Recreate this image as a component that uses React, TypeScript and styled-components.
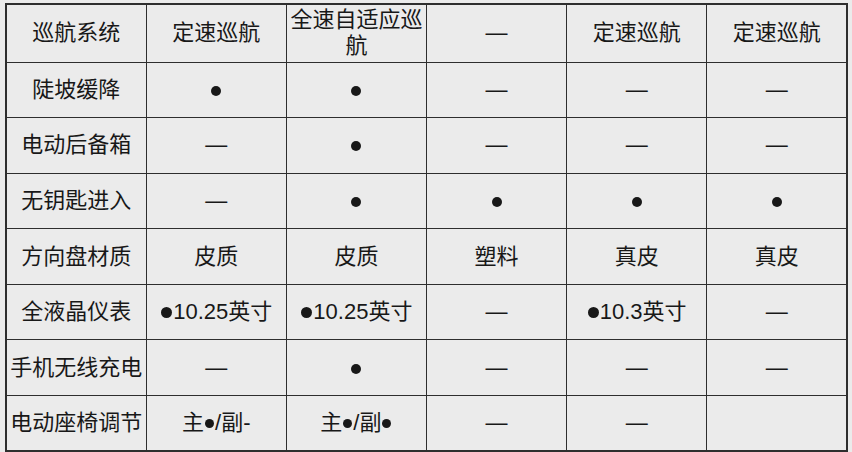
import React from 'react'
import styled, {createGlobalStyle} from 'styled-components'

const colors = {
    page: "#ebebeb",
    line: "#2e2e2e",
    text: "#181818",
};

const GlobalStyle = createGlobalStyle`
    html, body {
        margin: 0;
        padding: 0;
        background: ${colors.page};
    }
    body {
        font-family: "Liberation Sans", "Noto Sans CJK SC", sans-serif;
        color: ${colors.text};
    }
`

const D = '—'
const B = '●'

const rows: string[][] = [
    ['巡航系统', '定速巡航', '全速自适应巡航', D, '定速巡航', '定速巡航'],
    ['陡坡缓降', B, B, D, D, D],
    ['电动后备箱', D, B, D, D, D],
    ['无钥匙进入', D, B, B, B, B],
    ['方向盘材质', '皮质', '皮质', '塑料', '真皮', '真皮'],
    ['全液晶仪表', '●10.25英寸', '●10.25英寸', D, '●10.3英寸', D],
    ['手机无线充电', D, B, D, D, D],
    ['电动座椅调节', '主●/副-', '主●/副●', D, D, ''],
]

const Wrap = styled.div`
    padding: 3px 4px 0 5px;
`

const Table = styled.table`
    width: 843px;
    border-collapse: collapse;
    table-layout: fixed;
    border: 2px solid ${colors.line};
`

const Row = styled.tr<{$first?: boolean}>`
    height: ${_ => _.$first ? '58px' : '55.6px'};
`

const Cell = styled.td`
    border: 1.6px solid ${colors.line};
    padding: 0;
    text-align: center;
    vertical-align: middle;
    font-size: 22px;
    line-height: 26px;
    word-break: break-all;
`

const Dot = styled.span<{$size: number}>`
    display: inline-block;
    width: ${_ => _.$size}px;
    height: ${_ => _.$size}px;
    border-radius: 50%;
    background: ${colors.text};
    margin: 0 1px;
    vertical-align: ${_ => _.$size > 9 ? '1px' : '2px'};
`

function renderText(text: string) {
    if (text === B) return <Dot $size={10}/>
    if (text === D) return text
    const parts = text.split('●')
    const small = parts[0] === '主'
    return parts.map((p, i) => (
        <React.Fragment key={i}>
            {i > 0 && <Dot $size={small ? 9 : 11}/>}
            {p}
        </React.Fragment>
    ))
}

export default function App() {
    return (
        <Wrap>
            <GlobalStyle/>
            <Table>
                <tbody>
                    {rows.map((r, i) => (
                        <Row key={i} $first={i === 0}>
                            {r.map((c, j) => (
                                <Cell key={j}>{renderText(c)}</Cell>
                            ))}
                        </Row>
                    ))}
                </tbody>
            </Table>
        </Wrap>
    )
}
